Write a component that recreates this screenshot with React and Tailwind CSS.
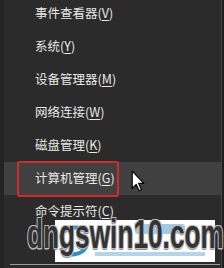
import React from "react";

const items = [
  { label: "事件查看器", key: "V" },
  { label: "系统", key: "Y" },
  { label: "设备管理器", key: "M" },
  { label: "网络连接", key: "W" },
  { label: "磁盘管理", key: "K" },
  { label: "计算机管理", key: "G", active: true },
  { label: "命令提示符", key: "C" },
];

function Cursor() {
  return (
    <svg width="14" height="22" viewBox="0 0 12 19" className="absolute left-[131px] top-[170px]">
      <path
        d="M1 1 L1 16 L4.5 12.5 L7 18 L9 17 L6.5 11.5 L11 11.5 Z"
        fill="#fff"
        stroke="#000"
        strokeWidth="1"
        strokeLinejoin="round"
      />
    </svg>
  );
}

function Watermark() {
  return (
    <div className="absolute left-[27px] top-[211px] w-[190px] h-[54px]">
      <div className="absolute left-[28px] top-[9px] w-[160px] h-[42px] bg-white">
        <svg width="160" height="42" viewBox="0 0 160 42">
          <path d="M6 18 C8 6 28 4 32 14" fill="none" stroke="#2f8fd0" strokeWidth="4" />
          <path d="M32 24 C30 36 10 38 6 28" fill="none" stroke="#2f8fd0" strokeWidth="4" />
          <rect x="80" y="4" width="50" height="10" rx="3" fill="#5aa8e0" opacity="0.6" />
          <rect x="40" y="32" width="110" height="4" fill="#7fb9e3" opacity="0.6" />
        </svg>
      </div>
      <div className="relative origin-left scale-x-[0.64] whitespace-nowrap font-bold text-[41px] leading-[46px] text-[#333] [font-family:'Liberation_Sans',Arial,sans-serif] [text-shadow:-1px_-1px_0_#b8b8b8,1px_-1px_0_#b8b8b8,-1px_1px_0_#b8b8b8,1px_1px_0_#b8b8b8,0_2px_1px_#888]">
        dngswin10.com
      </div>
    </div>
  );
}

export default function App() {
  return (
    <div className="relative w-[224px] h-[268px] overflow-hidden flex bg-[#2b2b2b] [font-family:'Noto_Sans_CJK_SC',sans-serif]">
      <div className="w-[4px] bg-[#232323]" />
      <div className="flex-1 flex flex-col">
        <div className="flex flex-col -mt-[3px]">
          {items.map((item) => (
            <div
              key={item.key}
              className={`h-[33px] flex items-center pl-[31px] text-[12.5px] text-[#e8e8e8] ${
                item.active ? "bg-[#404040]" : ""
              }`}
            >
              {item.label}
              <span>
                (<span className="underline underline-offset-2">{item.key}</span>)
              </span>
            </div>
          ))}
        </div>
        <div className="mt-auto mb-[3px] ml-[6px] mr-[1px] h-[1px] bg-[#9a9a9a]" />
      </div>
      <div className="w-[3px] bg-[#1e1e1e] border-l border-[#444]" />
      <div className="absolute left-[17px] top-[161px] w-[102px] h-[36px] border-2 border-[#d42a2a] rounded-[2px]" />
      <Cursor />
      <Watermark />
    </div>
  );
}
